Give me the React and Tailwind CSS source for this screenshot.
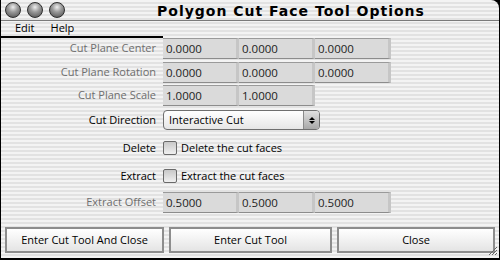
import React from 'react';

const stripes = "bg-[repeating-linear-gradient(180deg,#f3f3f3_0px,#f3f3f3_2px,#e2e2e2_2px,#e2e2e2_4px)]";

const Light = () => (
  <div className="w-[16px] h-[16px] rounded-full border border-[#2e2e2e] bg-[radial-gradient(circle_at_50%_30%,#eeeeee_0%,#9a9a9a_40%,#4a4a4a_100%)]" />
);

const Field = ({ value }) => (
  <div className="w-[76px] h-[21px] bg-[#dadada] border-r-[3px] border-r-[#c6c6c6] border-b border-b-[#8c8c8c] border-t border-t-[#9a9a9a] flex items-center pl-[3px] text-[11.5px] text-[#222]">
    {value}
  </div>
);

const Row = ({ label, dim, children, className = "" }) => (
  <div className={`flex items-center ${className}`}>
    <div className={`w-[157px] pr-[2px] text-right text-[11px] ${dim ? "text-[#6e6e6e]" : "text-black"}`}>{label}</div>
    <div className="ml-[5px] flex">{children}</div>
  </div>
);

const Check = ({ label }) => (
  <div className="flex items-center">
    <div className="w-[14px] h-[14px] rounded-[2px] border border-[#6a6a6a] bg-[linear-gradient(180deg,#c8c8c8,#f0f0f0)]" />
    <span className="ml-[4px] text-[11px] text-black">{label}</span>
  </div>
);

const Button = ({ children, className = "" }) => (
  <div className={`h-[26px] flex items-center justify-center border-2 border-[#8d8d8d] bg-[linear-gradient(180deg,#ffffff,#e4e4e4)] text-[11px] text-black ${className}`}>
    {children}
  </div>
);

export default function App() {
  return (
    <div className="w-[500px] h-[260px] bg-black font-['Open_Sans',sans-serif]">
      <div className={`w-[498px] h-[258px] ml-[1px] rounded-tr-[8px] overflow-hidden flex flex-col ${stripes}`}>
        <div className="h-[21px] flex items-center border-b border-[#7a7a7a] relative">
          <div className="flex gap-[6px] ml-[4px]">
            <Light />
            <Light />
            <Light />
          </div>
          <div className="absolute left-[156px] top-[1px] text-[14px] font-bold tracking-[1px] text-black font-['DejaVu_Sans',sans-serif]">Polygon Cut Face Tool Options</div>
        </div>
        <div className="h-[15px] flex items-center text-[11px] text-black gap-[16px] pl-[14px]">
          <span>Edit</span>
          <span>Help</span>
        </div>
        <div className="flex h-[2px]">
          <div className="w-[162px] bg-black" />
        </div>
        <Row label="Cut Plane Center" dim>
          <Field value="0.0000" />
          <Field value="0.0000" />
          <Field value="0.0000" />
        </Row>
        <Row label="Cut Plane Rotation" dim className="mt-[3px]">
          <Field value="0.0000" />
          <Field value="0.0000" />
          <Field value="0.0000" />
        </Row>
        <Row label="Cut Plane Scale" dim className="mt-[2px]">
          <Field value="1.0000" />
          <Field value="1.0000" />
        </Row>
        <Row label="Cut Direction" className="mt-[4px]">
          <div className="w-[157px] h-[20px] rounded-[4px] border border-[#6f6f6f] bg-[linear-gradient(180deg,#ffffff,#e6e6e6)] flex items-center">
            <span className="flex-1 pl-[5px] text-[11px] text-black">Interactive Cut</span>
            <div className="w-[16px] h-full border-l border-[#8a8a8a] rounded-r-[3px] bg-[linear-gradient(180deg,#e0e0e0,#a8a8a8)] flex flex-col items-center justify-center gap-[1px]">
              <div className="w-0 h-0 border-l-[3px] border-r-[3px] border-b-[3px] border-l-transparent border-r-transparent border-b-black" />
              <div className="w-0 h-0 border-l-[3px] border-r-[3px] border-t-[3px] border-l-transparent border-r-transparent border-t-black" />
            </div>
          </div>
        </Row>
        <Row label="Delete" className="mt-[9px] h-[18px]">
          <Check label="Delete the cut faces" />
        </Row>
        <Row label="Extract" className="mt-[10px] h-[18px]">
          <Check label="Extract the cut faces" />
        </Row>
        <Row label="Extract Offset" dim className="mt-[7px]">
          <Field value="0.5000" />
          <Field value="0.5000" />
          <Field value="0.5000" />
        </Row>
        <div className="flex gap-[5px] px-[4px] mt-[14px]">
          <Button className="w-[159px]">Enter Cut Tool And Close</Button>
          <Button className="w-[163px]">Enter Cut Tool</Button>
          <Button className="w-[158px]">Close</Button>
        </div>
        <div className="flex justify-end pr-[1px] mt-[-8px]">
          <svg width="11" height="11" viewBox="0 0 11 11">
            <path d="M10 2 L2 10 M10 5 L5 10 M10 8 L8 10" stroke="#666" strokeWidth="1" />
          </svg>
        </div>
      </div>
    </div>
  );
}
